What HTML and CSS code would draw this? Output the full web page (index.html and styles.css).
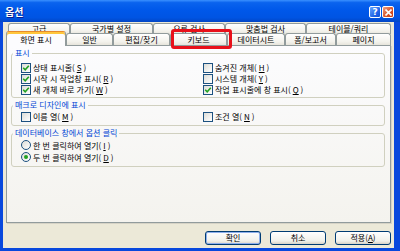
FILE: index.html
```html
<!DOCTYPE html>
<html lang="ko">
<head>
    <meta charset="UTF-8">
    <meta name="viewport" content="width=device-width, initial-scale=1.0">
    <title>옵션</title>
    <link rel="stylesheet" href="styles.css">
</head>
<body>

<div class="window">
    <div class="titlebar">
        <span class="title">옵션</span>
        <div class="title-buttons">
            <span class="tbtn help">?</span>
            <span class="tbtn close">
                <svg width="7" height="7" viewBox="0 0 7 7"><path d="M0.5 0.5 L6.5 6.5 M6.5 0.5 L0.5 6.5" stroke="#fff" stroke-width="1.6"/></svg>
            </span>
        </div>
    </div>

    <div class="dialog">
        <div class="tab-row back">
            <div class="tab w62">고급</div>
            <div class="tab w83">국가별 설정</div>
            <div class="tab w72">오류 검사</div>
            <div class="tab w81">맞춤법 검사</div>
            <div class="tab w85">테이블/쿼리</div>
        </div>
        <div class="tab-row front">
            <div class="tab active w60">화면 표시</div>
            <div class="tab w47">일반</div>
            <div class="tab w57">편집/찾기</div>
            <div class="tab w57">키보드<span class="highlight"></span></div>
            <div class="tab w58">데이터시트</div>
            <div class="tab w51">폼/보고서</div>
            <div class="tab w55">페이지</div>
        </div>

        <div class="panel">
            <fieldset class="group first">
                <legend>표시</legend>
                <div class="options two-col">
                    <label class="opt"><span class="chk"><svg width="8" height="8" viewBox="0 0 8 8"><path d="M1.2 3.8 L3.2 5.8 L6.8 1.8" fill="none" stroke="#21A121" stroke-width="1.6"/></svg></span>상태 표시줄(<u>S</u>)</label>
                    <label class="opt"><span class="chk"></span>숨겨진 개체(<u>H</u>)</label>
                    <label class="opt"><span class="chk"><svg width="8" height="8" viewBox="0 0 8 8"><path d="M1.2 3.8 L3.2 5.8 L6.8 1.8" fill="none" stroke="#21A121" stroke-width="1.6"/></svg></span>시작 시 작업창 표시(<u>R</u>)</label>
                    <label class="opt"><span class="chk"></span>시스템 개체(<u>Y</u>)</label>
                    <label class="opt"><span class="chk"><svg width="8" height="8" viewBox="0 0 8 8"><path d="M1.2 3.8 L3.2 5.8 L6.8 1.8" fill="none" stroke="#21A121" stroke-width="1.6"/></svg></span>새 개체 바로 가기(<u>W</u>)</label>
                    <label class="opt"><span class="chk"><svg width="8" height="8" viewBox="0 0 8 8"><path d="M1.2 3.8 L3.2 5.8 L6.8 1.8" fill="none" stroke="#21A121" stroke-width="1.6"/></svg></span>작업 표시줄에 창 표시(<u>Q</u>)</label>
                </div>
            </fieldset>

            <fieldset class="group">
                <legend>매크로 디자인에 표시</legend>
                <div class="options two-col">
                    <label class="opt"><span class="chk"></span>이름 열(<u>M</u>)</label>
                    <label class="opt"><span class="chk"></span>조건 열(<u>N</u>)</label>
                </div>
            </fieldset>

            <fieldset class="group">
                <legend>데이터베이스 창에서 옵션 클릭</legend>
                <div class="options">
                    <label class="opt tall"><span class="radio"></span>한 번 클릭하여 열기(<u>I</u>)</label>
                    <label class="opt tall"><span class="radio on"></span>두 번 클릭하여 열기(<u>D</u>)</label>
                </div>
            </fieldset>
        </div>

        <div class="actions">
            <button class="default">확인</button>
            <button>취소</button>
            <button>적용(<u>A</u>)</button>
        </div>
    </div>
</div>

</body>
</html>
```

FILE: styles.css
```css
* {
    box-sizing: border-box;
}
html, body {
    margin: 0;
    padding: 0;
}
body {
    width: 400px;
    height: 251px;
    overflow: hidden;
    font-family: "Noto Sans CJK KR", "Noto Sans", sans-serif;
    font-size: 8px;
    color: #000;
}
.window {
    width: 400px;
    height: 251px;
    display: flex;
    flex-direction: column;
    background: #0848DD;
}

/* title bar */
.titlebar {
    height: 22px;
    flex: none;
    display: flex;
    align-items: center;
    justify-content: space-between;
    padding: 0 6px 0 5px;
    background: linear-gradient(#3A90FF 0, #0A63EE 12%, #0058EA 45%, #0054E3 80%, #0346C6 100%);
}
.title {
    color: #fff;
    font-weight: bold;
    font-size: 10px;
    text-shadow: 1px 1px 0 #0A1E8C;
}
.title-buttons {
    display: flex;
    gap: 1px;
    margin-top: 2px;
}
.tbtn {
    width: 12px;
    height: 12px;
    border: 1px solid #fff;
    border-radius: 2px;
    display: flex;
    align-items: center;
    justify-content: center;
    color: #fff;
    font-family: "DejaVu Sans", sans-serif;
    font-weight: bold;
    font-size: 9px;
    line-height: 1;
}
.help {
    background: linear-gradient(135deg, #6AA8FF, #2366E8 60%, #0B4FD8);
}
.close {
    background: linear-gradient(135deg, #EFA084, #D9572C 55%, #C23A14);
}

/* dialog body */
.dialog {
    flex: 1;
    margin: 0 6px 3px 3px;
    padding: 1px 3px 0 3px;
    background: #ECE9D8;
    display: flex;
    flex-direction: column;
}

/* tabs */
.tab-row {
    display: flex;
    flex: none;
}
.tab-row.back {
    height: 11px;
    padding-left: 2px;
    margin-bottom: -1px;
}
.tab-row.back .tab {
    align-items: flex-start;
    padding-top: 0;
}
.tab-row.front {
    height: 12px;
}
.tab {
    position: relative;
    flex: none;
    border: 1px solid #919B9C;
    border-bottom: none;
    border-radius: 3px 3px 0 0;
    background: linear-gradient(#FFFFFF, #F3F2EC 70%, #E6E4DB);
    display: flex;
    align-items: center;
    justify-content: center;
    white-space: nowrap;
    line-height: 9px;
}
.tab.active {
    align-self: flex-start;
    height: 15px;
    margin-top: -2px;
    border-top: 1px solid #E68B2C;
    box-shadow: inset 0 2px 0 #FFC73C;
    background: #FCFCFE;
    padding-top: 1px;
    z-index: 2;
}
.w47 { width: 47px; }
.w51 { width: 51px; }
.w55 { width: 55px; }
.w57 { width: 57px; }
.w58 { width: 58px; }
.w60 { width: 60px; }
.w62 { width: 62px; }
.w72 { width: 72px; }
.w81 { width: 81px; }
.w83 { width: 83px; }
.w85 { width: 85px; }

/* red annotation box over the keyboard tab */
.highlight {
    position: absolute;
    left: 0;
    top: -5px;
    width: 61px;
    height: 20px;
    border: 3px solid #E8101A;
    border-radius: 3px;
    z-index: 3;
    pointer-events: none;
}

/* tab page */
.panel {
    flex: none;
    height: 178px;
    border: 1px solid #919B9C;
    background: linear-gradient(#FCFCFE, #F4F3EE);
    padding: 2px 5px 0 4px;
    box-shadow: 1px 1px 0 #D6D3C6;
}
.group {
    margin: 2px 0 0 0;
    padding: 1px 6px 3px 9px;
    border: 1px solid #D0D0BF;
    border-radius: 3px;
    min-width: 0;
}
.group.first {
    margin-top: 0;
    padding-top: 4px;
    padding-bottom: 2px;
}
.group legend {
    margin-left: -8px;
    padding: 0 2px;
    color: #0046D5;
    line-height: 10px;
}
.two-col {
    display: grid;
    grid-template-columns: 182px 1fr;
}
.opt {
    display: flex;
    align-items: center;
    gap: 2px;
    height: 11px;
    white-space: nowrap;
}
.opt.tall {
    height: 12px;
}
.chk, .radio {
    flex: none;
    width: 10px;
    height: 10px;
    border: 1px solid #1C5180;
    background: linear-gradient(135deg, #DCDCD7, #FFFFFF);
    display: flex;
    align-items: center;
    justify-content: center;
}
.radio {
    border-radius: 50%;
}
.radio.on::after {
    content: "";
    width: 4px;
    height: 4px;
    border-radius: 50%;
    background: #21A121;
}

/* buttons */
.actions {
    flex: 1;
    display: flex;
    justify-content: flex-end;
    align-items: flex-start;
    gap: 9px;
    padding-top: 8px;
}
button {
    width: 56px;
    height: 14px;
    padding: 0;
    font-family: inherit;
    font-size: 8px;
    line-height: 1;
    color: #000;
    border: 1px solid #003C74;
    border-radius: 3px;
    background: linear-gradient(#FFFFFF, #F0F0EA 75%, #D8D2C6);
}
button.default {
    box-shadow: inset 0 0 0 1px #8FB0EC;
}
```
